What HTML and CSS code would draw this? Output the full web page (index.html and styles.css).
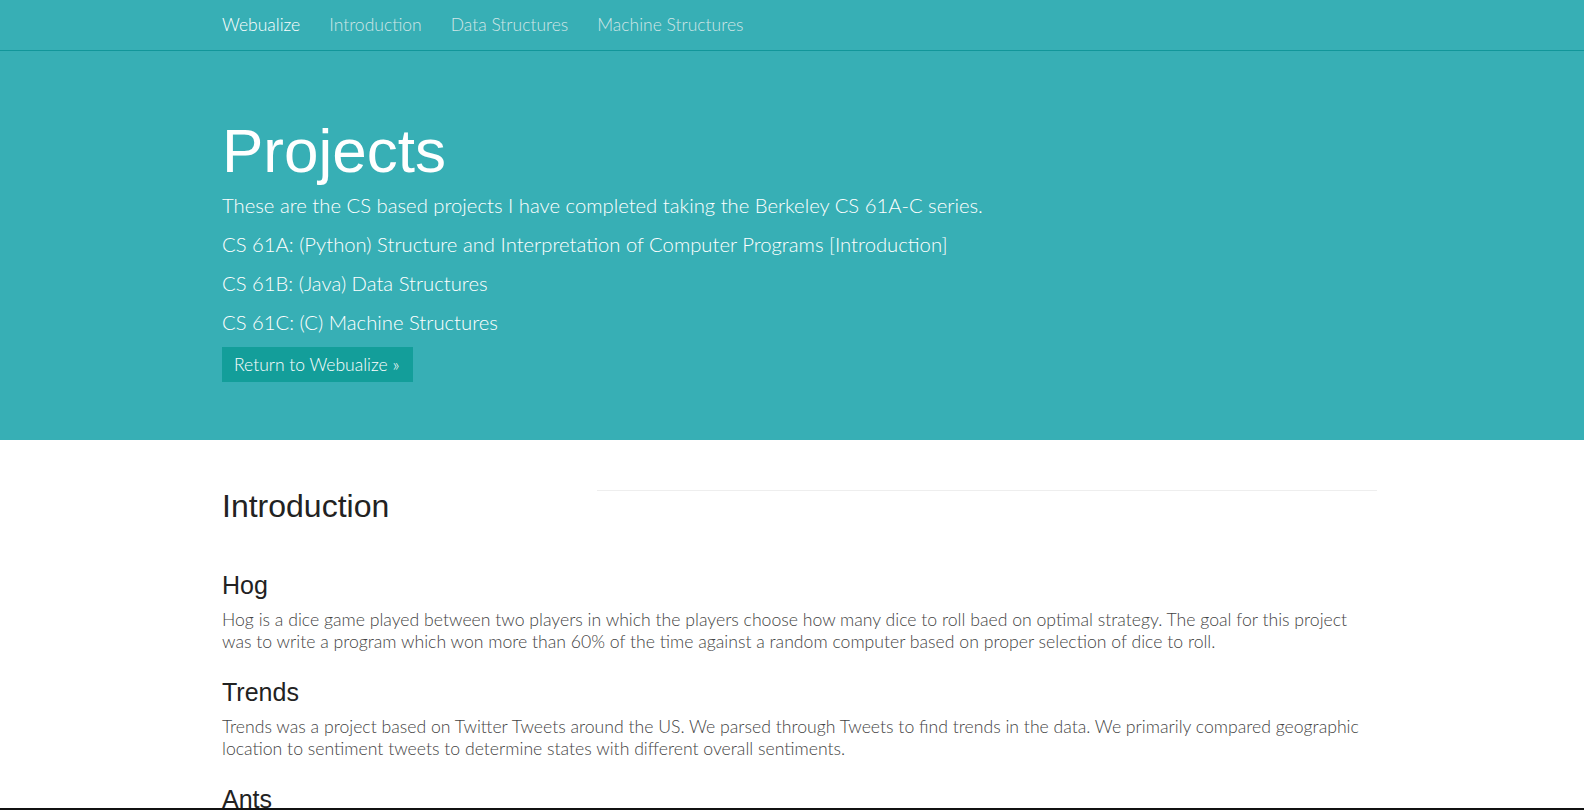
FILE: index.html
```html
<!DOCTYPE html>
<html lang="en">
<head>
<meta charset="utf-8">
<title>Projects</title>
<link rel="stylesheet" href="styles.css">
</head>
<body>
<nav class="navbar">
  <div class="container nav-inner">
    <a class="brand" href="#">Webualize</a>
    <a class="nav-link" href="#">Introduction</a>
    <a class="nav-link" href="#">Data Structures</a>
    <a class="nav-link" href="#">Machine Structures</a>
  </div>
</nav>
<header class="jumbotron">
  <div class="container">
    <h1>Projects</h1>
    <p>These are the CS based projects I have completed taking the Berkeley CS 61A-C series.</p>
    <p>CS 61A: (Python) Structure and Interpretation of Computer Programs [Introduction]</p>
    <p>CS 61B: (Java) Data Structures</p>
    <p>CS 61C: (C) Machine Structures</p>
    <a class="btn" href="#">Return to Webualize &raquo;</a>
  </div>
</header>
<main class="container">
  <section class="section">
    <div class="section-head">
      <h2>Introduction</h2>
      <hr class="rule">
    </div>
    <article class="project">
      <h3>Hog</h3>
      <p>Hog is a dice game played between two players in which the players choose how many dice to roll baed on optimal strategy. The goal for this project was to write a program which won more than 60% of the time against a random computer based on proper selection of dice to roll.</p>
    </article>
    <article class="project">
      <h3>Trends</h3>
      <p>Trends was a project based on Twitter Tweets around the US. We parsed through Tweets to find trends in the data. We primarily compared geographic location to sentiment tweets to determine states with different overall sentiments.</p>
    </article>
    <article class="project">
      <h3>Ants</h3>
      <p>Ants is a tower defense game in which ants defend their colony against invading bees.</p>
    </article>
  </section>
</main>
<div class="window-edge"></div>
</body>
</html>
```

FILE: styles.css
```css
* { box-sizing: border-box; }
html, body { margin: 0; padding: 0; }
body {
  font-family: "Lato", "Open Sans", sans-serif;
  font-weight: 300;
  font-size: 17.65px;
  color: #444;
  background: #fff;
  overflow: hidden;
  height: 810px;
}
a { text-decoration: none; }
.container {
  width: 1170px;
  margin: 0 auto;
  padding: 0 15px;
}
.navbar {
  background: #37afb5;
  border-bottom: 1px solid #12969a;
  height: 51px;
}
.nav-inner {
  display: flex;
  align-items: center;
  height: 50px;
  gap: 29px;
}
.brand, .nav-link {
  font-size: 17.5px;
  font-weight: 300;
  line-height: 20px;
}
.brand { color: #ffffff; }
.nav-link { color: #d0e6e7; }
.jumbotron {
  background: #37afb5;
  color: #fff;
  padding: 61px 0 58px;
}
.jumbotron h1 {
  font-family: "Liberation Sans", Arial, sans-serif;
  font-weight: 400;
  font-size: 62px;
  line-height: 69px;
  margin: 4px 0 5px;
}
.jumbotron p {
  font-size: 20.25px;
  line-height: 30px;
  margin: 0 0 9px;
}
.btn {
  display: inline-block;
  background: #139e9a;
  color: #fff;
  font-size: 17.5px;
  line-height: 23px;
  padding: 6px 14px 6px 12px;
  margin-top: 1px;
}
.section-head {
  display: grid;
  grid-template-columns: 375px 1fr;
  margin-right: -15px;
  margin-top: 49px;
  align-items: start;
}
.section-head h2 {
  font-family: "Liberation Sans", Arial, sans-serif;
  font-weight: 400;
  font-size: 32px;
  line-height: 35px;
  color: #222;
  margin: 0;
}
.rule {
  border: 0;
  border-top: 1px solid #eeeeee;
  margin: 1px 0 0;
}
.project h3 {
  font-family: "Liberation Sans", Arial, sans-serif;
  font-weight: 400;
  font-size: 25px;
  line-height: 26px;
  color: #222;
  margin: 0 0 11px;
}
.project p {
  line-height: 22px;
  margin: 0 0 26px;
}
.section-head + .project { margin-top: 48px; }
.window-edge {
  position: fixed;
  left: 0;
  right: 0;
  bottom: 0;
  height: 2px;
  background: #111;
}
```
